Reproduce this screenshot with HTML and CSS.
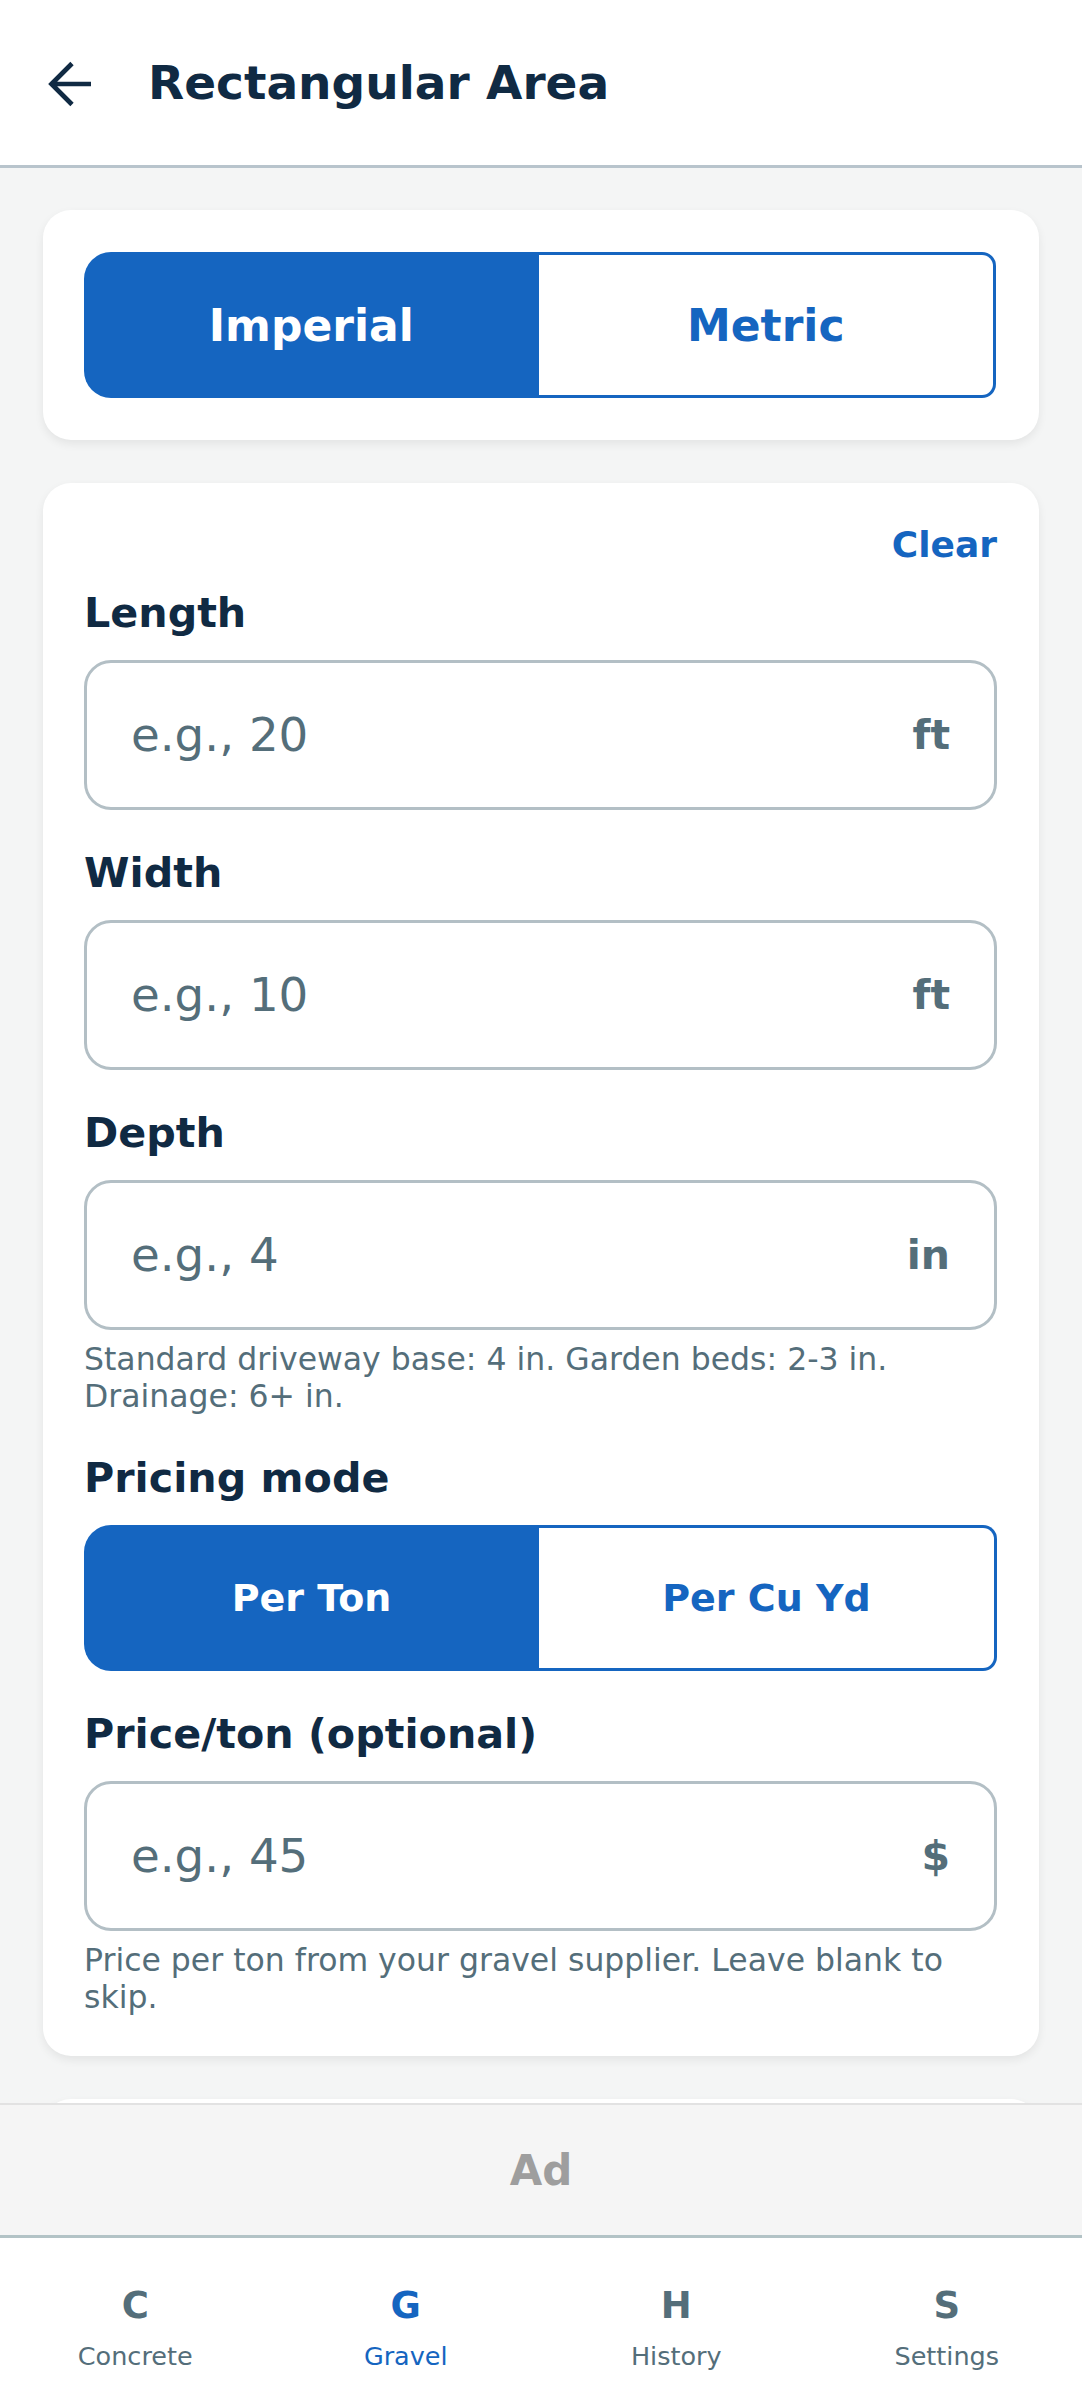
FILE: index.html
```html
<!DOCTYPE html>
<html lang="en">
<head>
<meta charset="utf-8">
<title>Rectangular Area</title>
<link rel="stylesheet" href="styles.css">
</head>
<body>
<div class="app">
  <header class="topbar">
    <button class="back" aria-label="Back">
      <svg width="46" height="46" viewBox="0 0 46 46" aria-hidden="true">
        <path d="M4 23 H44 M25 2.5 L4.5 23 L25 43.5" fill="none" stroke="#102a43" stroke-width="4.7" stroke-linejoin="miter"/>
      </svg>
    </button>
    <h1 class="title">Rectangular Area</h1>
  </header>

  <main class="content">
    <section class="card card-units">
      <div class="segment">
        <button class="seg-btn seg-active">Imperial</button>
        <button class="seg-btn seg-idle">Metric</button>
      </div>
    </section>

    <section class="card card-form">
      <div class="clear-row"><button class="clear">Clear</button></div>

      <div class="field">
        <div class="label">Length</div>
        <div class="input-box">
          <input class="input" type="text" placeholder="e.g., 20">
          <span class="unit">ft</span>
        </div>
      </div>

      <div class="field">
        <div class="label">Width</div>
        <div class="input-box">
          <input class="input" type="text" placeholder="e.g., 10">
          <span class="unit">ft</span>
        </div>
      </div>

      <div class="field">
        <div class="label">Depth</div>
        <div class="input-box">
          <input class="input" type="text" placeholder="e.g., 4">
          <span class="unit">in</span>
        </div>
        <p class="hint">Standard driveway base: 4 in. Garden beds: 2-3 in. Drainage: 6+ in.</p>
      </div>

      <div class="field">
        <div class="label">Pricing mode</div>
        <div class="segment segment-small">
          <button class="seg-btn seg-active">Per Ton</button>
          <button class="seg-btn seg-idle">Per Cu Yd</button>
        </div>
      </div>

      <div class="field field-last">
        <div class="label">Price/ton (optional)</div>
        <div class="input-box">
          <input class="input" type="text" placeholder="e.g., 45">
          <span class="unit">$</span>
        </div>
        <p class="hint">Price per ton from your gravel supplier. Leave blank to skip.</p>
      </div>
    </section>

    <section class="card card-result"></section>
  </main>

  <div class="ad">Ad</div>

  <nav class="tabbar">
    <a class="tab"><span class="tab-icon">C</span><span class="tab-label">Concrete</span></a>
    <a class="tab tab-active"><span class="tab-icon">G</span><span class="tab-label">Gravel</span></a>
    <a class="tab"><span class="tab-icon">H</span><span class="tab-label">History</span></a>
    <a class="tab"><span class="tab-icon">S</span><span class="tab-label">Settings</span></a>
  </nav>
</div>
</body>
</html>
```

FILE: styles.css
```css
* {
  box-sizing: border-box;
}

html, body {
  margin: 0;
  padding: 0;
}

body {
  font-family: "DejaVu Sans", "Noto Sans", sans-serif;
  background: #ffffff;
}

.app {
  width: 1082px;
  height: 2402px;
  display: flex;
  flex-direction: column;
  overflow: hidden;
}

/* Header */
.topbar {
  flex: none;
  height: 168px;
  background: #ffffff;
  border-bottom: 3px solid #b8c4cc;
  display: flex;
  align-items: center;
  padding-left: 47px;
}

.back {
  border: 0;
  background: transparent;
  padding: 0;
  width: 46px;
  height: 46px;
  display: flex;
  align-items: center;
  justify-content: center;
  margin-top: 2px;
}

.title {
  margin: 0 0 0 55px;
  font-size: 47px;
  font-weight: 700;
  color: #102a43;
}

/* Scroll content */
.content {
  flex: 1;
  min-height: 0;
  overflow: hidden;
  background: #f4f5f5;
  padding: 42px 43px 0;
  display: flex;
  flex-direction: column;
  gap: 43px;
}

.card {
  flex: none;
  background: #ffffff;
  border-radius: 28px;
  box-shadow: 0 4px 10px rgba(0, 0, 0, 0.07);
}

.card-units {
  padding: 42px 43px 42px 41px;
}

.card-form {
  padding: 41px 42px 40px 41px;
}

.card-result {
  height: 400px;
}

/* Segmented control */
.segment {
  display: flex;
  height: 146px;
}

.seg-btn {
  flex: 1;
  font-family: "DejaVu Sans", sans-serif;
  font-weight: 700;
  font-size: 44px;
  cursor: pointer;
  padding: 0;
}

.seg-active {
  background: #1565c0;
  color: #ffffff;
  border: 0;
  border-radius: 27px 0 0 27px;
}

.seg-idle {
  background: #ffffff;
  color: #1565c0;
  border: 3px solid #1565c0;
  border-left: 0;
  border-radius: 0 14px 14px 0;
}

.segment-small .seg-btn {
  font-size: 38px;
}

/* Form */
.clear-row {
  display: flex;
  justify-content: flex-end;
  margin-bottom: 23px;
}

.clear {
  border: 0;
  background: transparent;
  padding: 0;
  font-family: "DejaVu Sans", sans-serif;
  font-size: 36px;
  font-weight: 700;
  color: #1565c0;
  line-height: 42px;
}

.field {
  margin-bottom: 39px;
}

.field-last {
  margin-bottom: 0;
}

.label {
  font-size: 41.25px;
  font-weight: 700;
  color: #102a43;
  margin-bottom: 23px;
}

.input-box {
  height: 150px;
  border: 3px solid #b3bfc5;
  border-radius: 27px;
  display: flex;
  align-items: center;
  padding: 0 44px;
  background: #ffffff;
}

.input {
  flex: 1;
  min-width: 0;
  border: 0;
  outline: none;
  background: transparent;
  padding: 0;
  font-family: "DejaVu Sans", sans-serif;
  font-size: 46.75px;
  color: #102a43;
}

.input::placeholder {
  color: #546e7a;
  opacity: 1;
}

.unit {
  font-size: 41px;
  font-weight: 700;
  color: #546e7a;
}

.hint {
  margin: 11px 0 0;
  font-size: 31.5px;
  line-height: 37px;
  color: #546e7a;
}

/* Ad banner */
.ad {
  flex: none;
  height: 132px;
  border-top: 2px solid #e2e2e2;
  background: #f5f5f5;
  display: flex;
  align-items: center;
  justify-content: center;
  font-size: 42px;
  font-weight: 700;
  color: #9e9e9e;
}

/* Tab bar */
.tabbar {
  flex: none;
  height: 167px;
  border-top: 3px solid #b3c3c6;
  background: #ffffff;
  display: grid;
  grid-template-columns: repeat(4, 1fr);
  align-items: start;
  padding-top: 46px;
}

.tab {
  display: flex;
  flex-direction: column;
  align-items: center;
  color: #546e7a;
  text-decoration: none;
}

.tab-icon {
  font-size: 37px;
  font-weight: 700;
  line-height: 43px;
}

.tab-label {
  margin-top: 14px;
  font-size: 25.5px;
  line-height: 30px;
}

.tab-active {
  color: #1565c0;
}
```
